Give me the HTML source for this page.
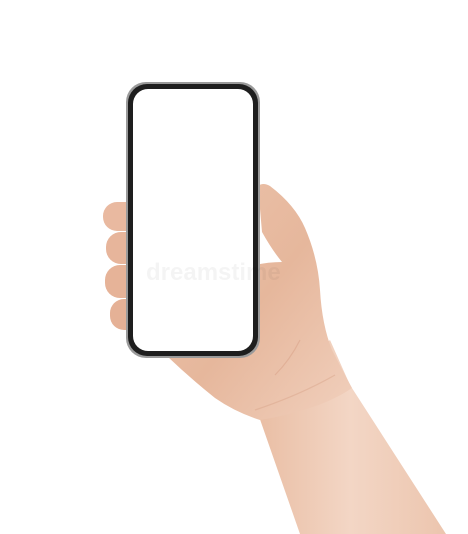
<!DOCTYPE html>
<html><head><style>html,body{margin:0;padding:0;background:#fff;width:468px;height:534px;overflow:hidden}</style></head>
<body>
<svg width="468" height="534" viewBox="0 0 468 534" xmlns="http://www.w3.org/2000/svg">
<defs>
<linearGradient id="sk" x1="0" y1="0" x2="1" y2="1">
<stop offset="0" stop-color="#ecc3ab"/><stop offset="0.5" stop-color="#e6b79c"/><stop offset="1" stop-color="#f1d0bd"/>
</linearGradient>
<linearGradient id="arm" x1="0" y1="0" x2="1" y2="0">
<stop offset="0" stop-color="#e9bda3"/><stop offset="0.5" stop-color="#f3d6c5"/><stop offset="1" stop-color="#ecc5ae"/>
</linearGradient>
</defs>
<path d="M255 405 L300 534 L446 534 L350 385 L330 340 Z" fill="url(#arm)"/>
<path d="M258 186 Q263 182 270 186 Q295 205 305 228 Q318 258 320 290 Q322 325 332 350 Q345 375 352 388 Q320 410 260 420 Q235 412 215 398 Q190 378 168 357 L250 350 L255 265 Q268 262 282 262 Q272 250 262 232 Z" fill="url(#sk)"/>
<path d="M300 340 Q290 360 275 375" stroke="#d8a085" stroke-width="1.2" fill="none" opacity=".5"/>
<path d="M255 410 Q300 395 335 375" stroke="#d9a68c" stroke-width="1.2" fill="none" opacity=".5"/>
<rect x="103" y="202" width="40" height="29" rx="14" fill="#e9b9a0"/>
<rect x="106" y="232" width="36" height="32" rx="15" fill="#e7b59b"/>
<rect x="105" y="265" width="37" height="33" rx="15" fill="#e6b398"/>
<rect x="110" y="299" width="32" height="31" rx="14" fill="#e5b196"/>
<rect x="126" y="82" width="134" height="276" rx="20" fill="#9a9a9a"/>
<rect x="128" y="84" width="130" height="272" rx="19" fill="#1e1e1e"/>
<rect x="133" y="89" width="120" height="262" rx="15" fill="#fff"/>
<text x="146" y="280" font-family="Liberation Sans, sans-serif" font-size="24" font-weight="bold" fill="#000" opacity=".04">dreamstime</text>
</svg>
</body></html>
